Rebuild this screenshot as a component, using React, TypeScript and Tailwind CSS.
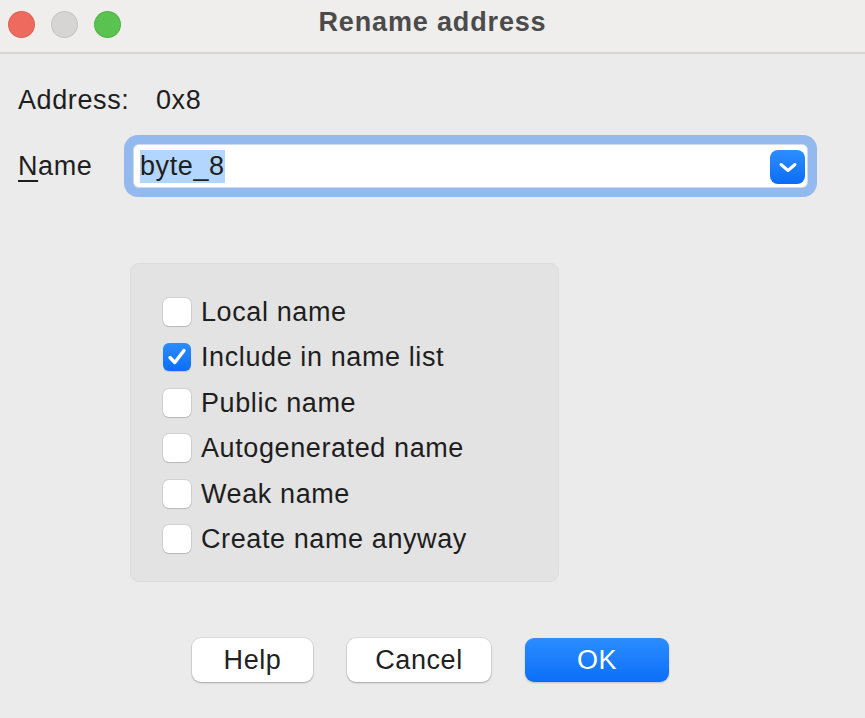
const OPTIONS: { label: string; checked: boolean }[] = [
  { label: 'Local name', checked: false },
  { label: 'Include in name list', checked: true },
  { label: 'Public name', checked: false },
  { label: 'Autogenerated name', checked: false },
  { label: 'Weak name', checked: false },
  { label: 'Create name anyway', checked: false },
];

function Checkbox({ checked }: { checked: boolean }) {
  if (checked) {
    return (
      <span className="flex h-[28px] w-[28px] shrink-0 items-center justify-center rounded-[6px] bg-linear-to-b from-[#2b8cff] to-[#0b6ef6] shadow-[0_1px_1px_rgba(0,0,0,0.15)]">
        <svg width="28" height="28" viewBox="0 0 28 28" fill="none">
          <path d="M7 14.5 L11.8 19.5 L21 7.5" stroke="#ffffff" strokeWidth="3.4" strokeLinecap="round" strokeLinejoin="round" />
        </svg>
      </span>
    );
  }
  return (
    <span className="h-[28px] w-[28px] shrink-0 rounded-[6px] bg-white shadow-[0_0_0_1px_rgba(0,0,0,0.08),0_1px_1px_rgba(0,0,0,0.12)]" />
  );
}

export default function App() {
  return (
    <div className="flex h-[718px] w-[865px] flex-col bg-[#ebebeb] font-['Liberation_Sans',Arial,sans-serif] text-[27px] tracking-[0.6px] text-[#1e1e1e]">
      {/* title bar */}
      <div className="grid h-[54px] shrink-0 grid-cols-[122px_1fr_122px] items-center border-b-2 border-[#d7d6d5] bg-[#efeeed] pb-[8px]">
        <div className="flex items-center gap-[16px] pl-[8px] pt-[4px]">
          <span className="h-[27px] w-[27px] rounded-full bg-[#ee6a5e] shadow-[inset_0_0_0_1px_rgba(0,0,0,0.08)]" />
          <span className="h-[27px] w-[27px] rounded-full bg-[#d6d5d4] shadow-[inset_0_0_0_1px_rgba(0,0,0,0.08)]" />
          <span className="h-[27px] w-[27px] rounded-full bg-[#5ac24f] shadow-[inset_0_0_0_1px_rgba(0,0,0,0.08)]" />
        </div>
        <div className="text-center font-bold tracking-[0.85px] text-[#4b4b4b]">Rename address</div>
        <div />
      </div>

      {/* address */}
      <div className="mt-[30px] flex h-[32px] items-center pl-[18px] leading-[32px]">
        <span className="w-[138px]">Address:</span>
        <span>0x8</span>
      </div>

      {/* name */}
      <div className="mt-[19px] flex h-[62px] items-center pl-[18px]">
        <label className="w-[106px] leading-[32px]">
          <span className="underline decoration-[1.5px] underline-offset-[5px]">N</span>ame
        </label>
        <div className="h-[62px] w-[693px] rounded-[14px] bg-[#93b9ee] p-[9px]">
          <div className="flex h-full items-center rounded-[6px] bg-white pl-[7px] pr-[3px] shadow-[inset_0_0_0_1px_rgba(60,110,190,0.25)]">
            <span className="bg-[#b3d6fe] leading-[33px]">byte_8</span>
            <div className="flex-1" />
            <span className="mt-[2px] flex h-[34px] w-[35px] items-center justify-center rounded-[8px] bg-linear-to-b from-[#2d8eff] to-[#0a6cf5]">
              <svg width="24" height="24" viewBox="0 0 24 24" fill="none">
                <path d="M5 9.5 L12 15.5 L19 9.5" stroke="#ffffff" strokeWidth="3" strokeLinecap="round" strokeLinejoin="round" />
              </svg>
            </span>
          </div>
        </div>
      </div>

      {/* options group */}
      <div className="ml-[130px] mt-[66px] w-[429px] rounded-[9px] border border-[#dcdcdc] bg-[#e3e3e3] pb-[19px] pl-[32px] pt-[25px]">
        {OPTIONS.map((opt) => (
          <div key={opt.label} className="flex h-[45.5px] items-center gap-[10px]">
            <Checkbox checked={opt.checked} />
            <span className="leading-[32px]">{opt.label}</span>
          </div>
        ))}
      </div>

      {/* buttons */}
      <div className="mt-[56px] flex gap-[34px] pl-[192px]">
        <button className="h-[44px] w-[121px] rounded-[9px] bg-white text-[#222222] shadow-[0_0_0_1px_rgba(0,0,0,0.06),0_1px_2px_rgba(0,0,0,0.25)]">
          Help
        </button>
        <button className="h-[44px] w-[144px] rounded-[9px] bg-white text-[#222222] shadow-[0_0_0_1px_rgba(0,0,0,0.06),0_1px_2px_rgba(0,0,0,0.25)]">
          Cancel
        </button>
        <button className="h-[44px] w-[144px] rounded-[9px] bg-linear-to-b from-[#2b8dff] to-[#0a6ef7] text-white shadow-[0_1px_2px_rgba(0,0,0,0.2)]">
          OK
        </button>
      </div>
    </div>
  );
}
